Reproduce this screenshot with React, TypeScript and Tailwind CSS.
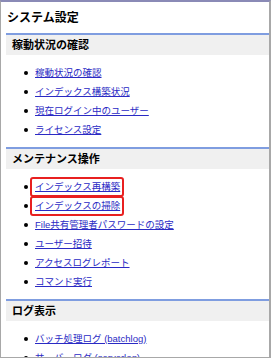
import React from "react";

type Item = { label: string; boxed?: boolean };

const sections: { title: string; items: Item[] }[] = [
  {
    title: "稼動状況の確認",
    items: [
      { label: "稼動状況の確認" },
      { label: "インデックス構築状況" },
      { label: "現在ログイン中のユーザー" },
      { label: "ライセンス設定" },
    ],
  },
  {
    title: "メンテナンス操作",
    items: [
      { label: "インデックス再構築", boxed: true },
      { label: "インデックスの掃除", boxed: true },
      { label: "File共有管理者パスワードの設定" },
      { label: "ユーザー招待" },
      { label: "アクセスログレポート" },
      { label: "コマンド実行" },
    ],
  },
  {
    title: "ログ表示",
    items: [
      { label: "バッチ処理ログ (batchlog)" },
      { label: "サーバーログ (serverlog)" },
    ],
  },
];

export default function App() {
  return (
    <div
      className="w-[271px] h-[358px] overflow-hidden bg-white border-t-2 border-t-[#8a8ab6] border-l border-l-[#a8a8a8] border-r-2 border-r-[#a8a8a8] border-b border-b-[#a8a8a8] text-black"
      style={{ fontFamily: '"Liberation Sans", "Noto Sans CJK JP", sans-serif' }}
    >
      <div className="h-[31px] flex items-center pl-[6px] text-[12px] font-bold">
        システム設定
      </div>
      <div className="pl-[5px]">
        {sections.map((s) => (
          <div key={s.title}>
            <div className="h-[2px] bg-[#7f9de0]" />
            <div className="h-[20px] bg-[#f0f0f0] flex items-center pl-[6px] text-[11px] font-bold">
              {s.title}
            </div>
            <ul className="pt-[8px] pb-[8px]">
              {s.items.map((it) => (
                <li key={it.label} className="h-[19px] flex items-center pl-[18px]">
                  <span className="w-[4px] h-[4px] rounded-full bg-black mr-[7px]" />
                  <span className="relative h-[19px] flex items-center">
                    <a
                      href="#"
                      className="text-[9.5px] text-[#2a2ac4] underline leading-none"
                    >
                      {it.label}
                    </a>
                    {it.boxed && (
                      <span className="absolute left-[-5px] right-[-4px] top-0 bottom-[-1px] border-2 border-[#e82020] rounded-[3px]" />
                    )}
                  </span>
                </li>
              ))}
            </ul>
          </div>
        ))}
      </div>
    </div>
  );
}
